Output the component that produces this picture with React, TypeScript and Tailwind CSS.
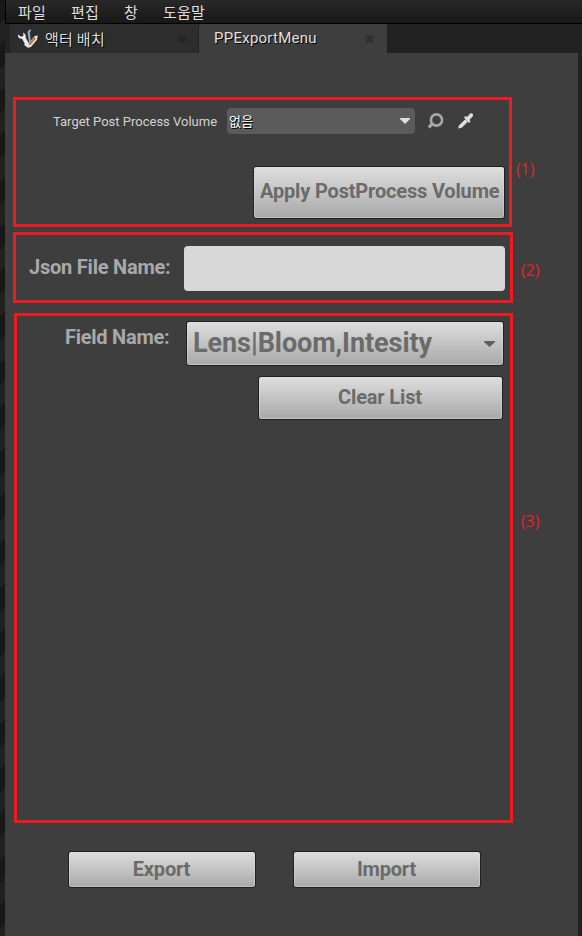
import type { ReactNode } from 'react';

const korean = "font-['Noto_Sans_CJK_KR',sans-serif]";
const note = "text-[16px] leading-6 tracking-[-0.1px] text-[#e5222b] font-['Open_Sans',sans-serif]";

function SlateButton({ className, children }: { className: string; children: ReactNode }) {
  return (
    <button
      className={`flex shrink-0 items-center rounded-[3px] border border-[#202020] bg-linear-to-b from-[#dedede] to-[#a9a9a9] font-bold whitespace-nowrap text-[#6b6b6b] shadow-[inset_0_0_0_1px_rgba(225,225,225,0.4)] ${className}`}
    >
      {children}
    </button>
  );
}

function CloseMark() {
  return (
    <svg width="8" height="8" viewBox="0 0 8 8" className="mt-px shrink-0 opacity-60">
      <path d="M0 0h8v8H0z" fill="#242424" opacity=".5" />
      <path d="M1 1l6 6M7 1l-6 6" stroke="#1b1b1b" strokeWidth="1.500" opacity=".7" />
    </svg>
  );
}

function ToolsIcon() {
  return (
    <svg width="22" height="20" viewBox="0 0 22 20" className="shrink-0">
      <path d="M1 5.500C.6 8.500 2.500 10 5 9.800l4 7c1.500 2.200 4.500 1.400 3.800-1L8.700 8.800c.6-2.200-.4-4.300-2.700-5.300l.5 3.300-2.200 1z" fill="#e6ebf0" />
      <path d="M13.800.4c-2.300.2-3.600 1.800-3.100 4.100l1.500 8.800 1.700-.3-1-8.600c-.2-1.300.3-2.300 1.300-2.700z" fill="#8eacd4" />
      <path d="M20.800 6.500l-.8 4.300-5.700 6.800c-1.700 1.700-4.700.8-4.100-1.700l7.600-9z" fill="#efe9e2" />
      <path d="M19 9.500l-5.400 6.600c-1.200 1-2.800 0-2-1.500l5.500-6.600z" fill="#c17a48" />
      <path d="M8 14.500l3.800 3" stroke="#dbeaff" strokeWidth="3" />
    </svg>
  );
}

export default function App() {
  return (
    <div className="flex h-[936px] w-[582px] overflow-hidden bg-[#222222] font-[Roboto,sans-serif]">
      <div className="w-[5px] shrink-0 bg-[repeating-linear-gradient(135deg,#181818_0px,#181818_16px,#212121_17px,#212121_32px)]" />
      <div className="flex min-w-0 flex-1 flex-col">
        <nav className={`flex h-6 shrink-0 items-center border-b border-l border-black bg-linear-to-b from-[#282828] to-[#181818] pb-px pl-3 text-[15px] leading-none tracking-[0.2px] text-[#dedede] ${korean}`}>
          <span className="w-[53px] shrink-0">파일</span>
          <span className="w-[53px] shrink-0">편집</span>
          <span className="w-[39px] shrink-0">창</span>
          <span className="shrink-0">도움말</span>
        </nav>
        <div className="flex h-[29px] shrink-0 pl-[5px]">
          <div className="flex w-[189px] items-center border-r border-[#222] bg-[#2d2d2d] pl-[7px]">
            <ToolsIcon />
            <span className={`ml-[6px] w-[133px] shrink-0 text-[15px] leading-none tracking-[0.3px] text-[#dedede] [text-shadow:1px_1px_0_#000] ${korean}`}>액터 배치</span>
            <CloseMark />
          </div>
          <div className="flex w-[188px] items-center rounded-t-[2px] bg-[#3e3e3e] pl-[15px]">
            <span className="w-[152px] shrink-0 text-[15px] leading-none tracking-[0.25px] text-[#e0e0e0] [text-shadow:1px_1px_0_#000]">PPExportMenu</span>
            <CloseMark />
          </div>
        </div>

        <main className="mr-1 flex flex-1 flex-col bg-[#3e3e3e] pt-11 pl-2">
          <div className="flex">
            <section className="flex h-[130px] w-[499px] shrink-0 flex-col border-[3px] border-[#ed1c24] pt-2">
              <div className="flex h-[26px] items-center pl-[37px]">
                <span className="w-[174px] shrink-0 pt-px text-[13px] whitespace-nowrap text-[#d2d2d2]">Target Post Process Volume</span>
                <div className={`flex h-[26px] w-[188px] items-center justify-between rounded-[4px] bg-[#5b5b5b] pr-[5px] pl-[2px] text-[13px] text-white [text-shadow:1px_1px_0_#000] ${korean}`}>
                  <span className="tracking-[0.3px]">없음</span>
                  <svg width="10" height="6" viewBox="0 0 10 6"><path d="M0 0h10v1L5 6 0 1z" fill="#dedede" /></svg>
                </div>
                <svg width="16" height="16" viewBox="0 0 16 16" className="ml-[13px] shrink-0">
                  <circle cx="8.500" cy="7" r="5.600" fill="none" stroke="#a8a8a8" strokeWidth="2.600" />
                  <path d="M4.400 10.500L.8 14.500" stroke="#a8a8a8" strokeWidth="3.200" />
                </svg>
                <svg width="16" height="16" viewBox="0 0 16 16" className="ml-[14px] shrink-0">
                  <path d="M0 15.500l1.200-3.300 6-6 2.600 2.600-6 6z" fill="#dedede" />
                  <path d="M6 4.500l1.400-1.400 1.500 1L12 .8c1.600-1.500 4 .7 2.800 2.500l-3.200 3.500.9 1.700-1.500 1.400z" fill="#dedede" />
                </svg>
              </div>
              <SlateButton className="mt-8 ml-[237px] h-[53px] w-[252px] pb-[3px] pl-[6px] text-[20px] tracking-[-0.17px]">Apply PostProcess Volume</SlateButton>
            </section>
            <span className={`mt-[60px] ml-1 ${note}`}>(1)</span>
          </div>

          <div className="mt-[5px] flex">
            <section className="flex h-[71px] w-[500px] shrink-0 items-start border-[3px] border-[#ed1c24] pt-[11px] pl-[13px]">
              <label className="w-[155px] shrink-0 text-[20px] leading-[42px] font-bold tracking-[-0.22px] whitespace-nowrap text-[#a9a9a9]">Json File Name:</label>
              <input className="h-[45px] w-[321px] rounded-[4px] bg-[#d8d8d8] outline-none" />
            </section>
            <span className={`mt-[26px] ml-2 ${note}`}>(2)</span>
          </div>

          <div className="mt-[10px] ml-px flex">
            <section className="flex h-[510px] w-[499px] shrink-0 flex-col border-[3px] border-[#ed1c24] pt-[5px]">
              <div className="flex">
                <label className="ml-12 w-[121px] shrink-0 text-[20px] leading-[33px] font-bold tracking-[-0.25px] whitespace-nowrap text-[#a9a9a9]">Field Name:</label>
                <SlateButton className="h-[45px] w-[318px] justify-between pr-2 pl-[6px] text-[27px] tracking-[-0.07px]">
                  <span>Lens|Bloom,Intesity</span>
                  <svg width="11" height="6" viewBox="0 0 11 6"><path d="M0 0h11v1L5.500 6 0 1z" fill="#5e5e5e" /></svg>
                </SlateButton>
              </div>
              <SlateButton className="mt-[10px] ml-[241px] h-11 w-[245px] justify-center pr-px pb-[3px] text-[20px] tracking-[-0.15px]">Clear List</SlateButton>
            </section>
            <span className={`mt-[196px] ml-2 ${note}`}>(3)</span>
          </div>

          <div className="mt-7 ml-[55px] flex gap-[37px]">
            <SlateButton className="h-[37px] w-[188px] justify-center pr-px pb-[2px] text-[20px] tracking-[-0.2px]">Export</SlateButton>
            <SlateButton className="h-[37px] w-[188px] justify-center pr-px pb-[2px] text-[20px] tracking-[-0.2px]">Import</SlateButton>
          </div>
        </main>
      </div>
    </div>
  );
}
